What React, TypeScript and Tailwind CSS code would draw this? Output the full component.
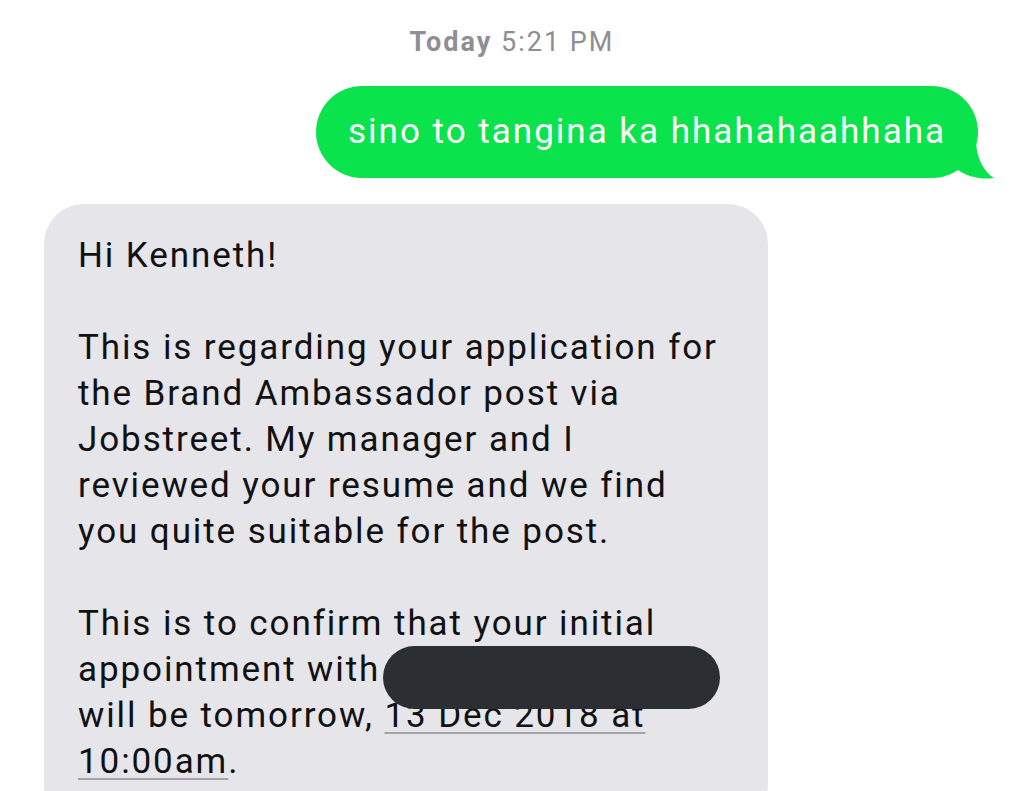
import React from "react";

export default function App() {
  const font = { fontFamily: 'Roboto, "Liberation Sans", sans-serif' };
  return (
    <div className="w-[1024px] h-[791px] overflow-hidden bg-white" style={font}>
      <div className="pt-[28px] text-center text-[27px] leading-[28px] tracking-[2px] text-[#8e8e93]">
        <span className="font-bold">Today</span> <span>5:21 PM</span>
      </div>
      <div className="flex justify-end pr-[46px] mt-[30px]">
        <div className="relative">
          <div className="relative z-10 rounded-[46px] bg-[#0be34d] px-[32px] py-[23px] text-[35px] leading-[46px] tracking-[2px] text-white whitespace-nowrap">
            sino to tangina ka hhahahaahhaha
          </div>
          <svg className="absolute right-[-18px] bottom-[-2px] z-0" width="50" height="40" viewBox="0 0 50 40">
            <path d="M0 0 L30 0 C30 18 38 32 48 38 C36 40 22 37 12 30 L0 30 Z" fill="#0be34d" />
          </svg>
        </div>
      </div>
      <div className="ml-[44px] mt-[26px] w-[724px] rounded-[40px] bg-[#e5e5ea] pl-[34px] pr-[10px] pt-[29px] pb-[40px] text-[35px] leading-[46px] tracking-[1.9px] text-[#111111] whitespace-nowrap">
        <div>Hi Kenneth!</div>
        <div className="h-[46px]" />
        <div>This is regarding your application for</div>
        <div>the Brand Ambassador post via</div>
        <div>Jobstreet. My manager and I</div>
        <div>reviewed your resume and we find</div>
        <div>you quite suitable for the post.</div>
        <div className="h-[46px]" />
        <div>This is to confirm that your initial</div>
        <div>
          appointment with
          <span className="relative inline-block w-0 h-[1px]">
            <span className="absolute left-[3px] top-[-34px] w-[337px] h-[63px] rounded-full bg-[#2b2f33]" />
          </span>
        </div>
        <div>
          will be tomorrow,{" "}
          <span className="underline decoration-[#a3a3ab] decoration-2 underline-offset-[5px]">13 Dec 2018 at</span>
        </div>
        <div>
          <span className="underline decoration-[#a3a3ab] decoration-2 underline-offset-[5px]">10:00am</span>.
        </div>
      </div>
    </div>
  );
}
